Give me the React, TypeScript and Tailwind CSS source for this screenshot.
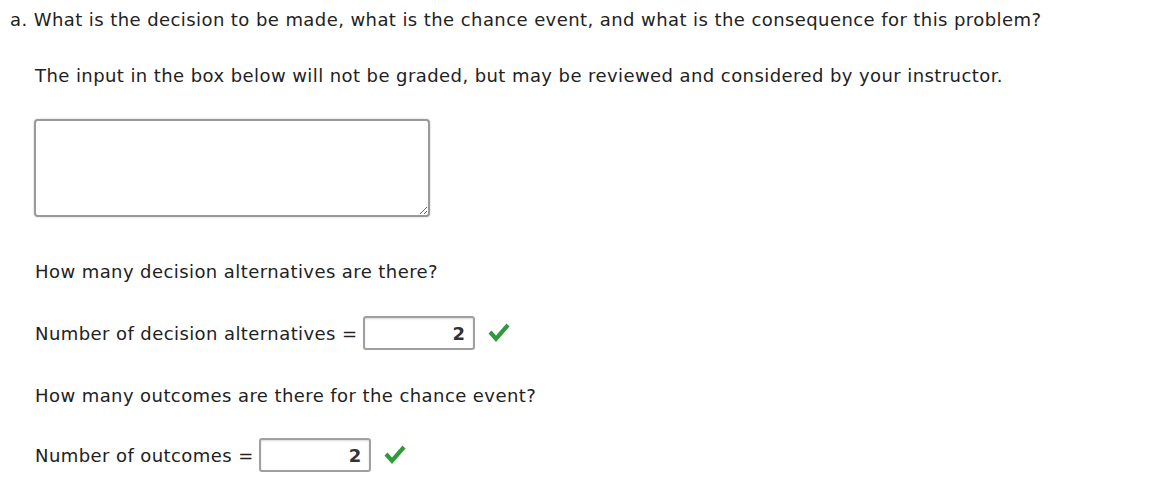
import React from "react";

function Check() {
  return (
    <svg width="22" height="22" viewBox="0 0 22 22" className="ml-[13px]">
      <path d="M0.5 11.5 L3.5 8.5 L8 13.5 L18.5 1.5 L21.5 4.5 L8 20 Z" fill="#2f9a3a" />
    </svg>
  );
}

function NumberField({ label, value }: { label: string; value: string }) {
  return (
    <div className="flex items-center">
      <span>{label} =</span>
      <div className="ml-[5px] flex h-[34px] w-[112px] items-center justify-end rounded-[3px] border-2 border-[#a0a0a0] bg-white pr-[7px] font-bold text-[#333] shadow-[inset_0_1px_2px_rgba(0,0,0,0.15)]">
        {value}
      </div>
      <Check />
    </div>
  );
}

export default function App() {
  return (
    <div className="min-h-[496px] w-[1152px] bg-white text-[18px] tracking-[0.42px] text-[#222] [font-family:Verdana,'DejaVu_Sans',sans-serif]">
      <p className="pl-[10px] pt-[9px] leading-[22px]">
        a. What is the decision to be made, what is the chance event, and what is the consequence for this problem?
      </p>
      <div className="pl-[35px]">
        <p className="mt-[34px] leading-[22px]">
          The input in the box below will not be graded, but may be reviewed and considered by your instructor.
        </p>
        <textarea className="-ml-px mt-[32px] block h-[98px] w-[396px] resize rounded-[4px] border-2 border-[#9a9a9a] bg-white shadow-[0_0_2px_rgba(0,0,0,0.25)]" />
        <p className="mt-[44px] leading-[22px]">How many decision alternatives are there?</p>
        <div className="mt-[33px]">
          <NumberField label="Number of decision alternatives" value="2" />
        </div>
        <p className="mt-[35px] leading-[22px]">How many outcomes are there for the chance event?</p>
        <div className="mt-[31px]">
          <NumberField label="Number of outcomes" value="2" />
        </div>
      </div>
    </div>
  );
}
